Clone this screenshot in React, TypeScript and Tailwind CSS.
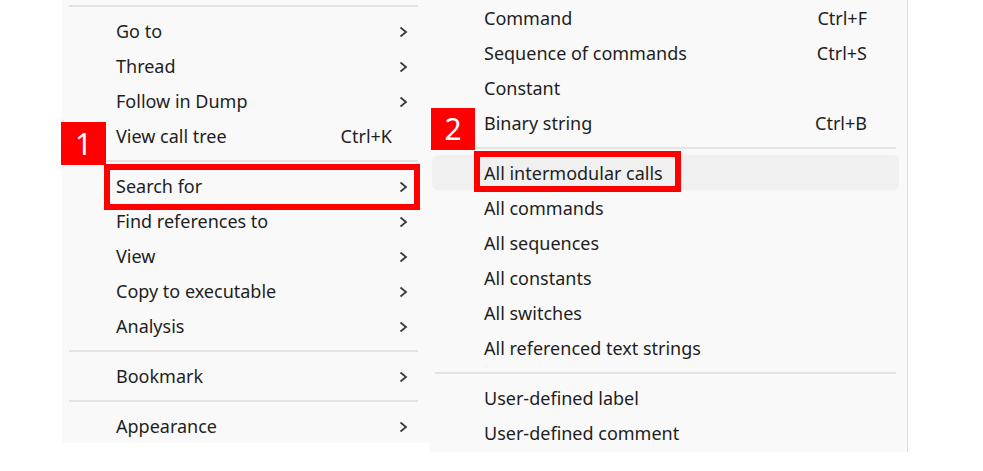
import React from "react"

type Item =
  | { kind: "item"; label: string; shortcut?: string; sub?: boolean; hover?: boolean }
  | { kind: "sep" }

const leftItems: Item[] = [
  { kind: "item", label: "Go to", sub: true },
  { kind: "item", label: "Thread", sub: true },
  { kind: "item", label: "Follow in Dump", sub: true },
  { kind: "item", label: "View call tree", shortcut: "Ctrl+K" },
  { kind: "sep" },
  { kind: "item", label: "Search for", sub: true },
  { kind: "item", label: "Find references to", sub: true },
  { kind: "item", label: "View", sub: true },
  { kind: "item", label: "Copy to executable", sub: true },
  { kind: "item", label: "Analysis", sub: true },
  { kind: "sep" },
  { kind: "item", label: "Bookmark", sub: true },
  { kind: "sep" },
  { kind: "item", label: "Appearance", sub: true },
]

const rightItems: Item[] = [
  { kind: "item", label: "Command", shortcut: "Ctrl+F" },
  { kind: "item", label: "Sequence of commands", shortcut: "Ctrl+S" },
  { kind: "item", label: "Constant" },
  { kind: "item", label: "Binary string", shortcut: "Ctrl+B" },
  { kind: "sep" },
  { kind: "item", label: "All intermodular calls", hover: true },
  { kind: "item", label: "All commands" },
  { kind: "item", label: "All sequences" },
  { kind: "item", label: "All constants" },
  { kind: "item", label: "All switches" },
  { kind: "item", label: "All referenced text strings" },
  { kind: "sep" },
  { kind: "item", label: "User-defined label" },
  { kind: "item", label: "User-defined comment" },
]

function Chevron() {
  return (
    <svg width="9" height="12" viewBox="0 0 9 12" className="text-[#3a3a3a]">
      <polyline points="1.5,1.5 7,6 1.5,10.5" fill="none" stroke="currentColor" strokeWidth="1.8" />
    </svg>
  )
}

function MenuRows({ items, side }: { items: Item[]; side: "left" | "right" }) {
  const sepInset = side === "left" ? "pl-[7px] pr-[11px]" : "pl-[6px] pr-[11px]"
  return (
    <>
      {items.map((it, i) =>
        it.kind === "sep" ? (
          <div key={i} className={`h-[15px] flex items-center ${sepInset}`}>
            <div className="h-[2px] w-full bg-[#e3e3e3]" />
          </div>
        ) : (
          <div
            key={i}
            className={`relative h-[35px] flex items-center pt-[2px] ${
              it.hover
                ? "bg-[#f0f0f0] rounded-md ml-[3px] mr-[8px] pl-[52px]"
                : side === "left"
                  ? "pl-[54px]"
                  : "pl-[55px]"
            }`}
          >
            <span className="flex-1">{it.label}</span>
            {it.shortcut && (
              <span className={side === "left" ? "mr-[37px]" : "mr-[40px]"}>{it.shortcut}</span>
            )}
            {it.sub && (
              <span className="absolute right-[21px] top-[13px]">
                <Chevron />
              </span>
            )}
          </div>
        )
      )}
    </>
  )
}

export default function App() {
  return (
    <div
      className="relative w-[983px] h-[471px] bg-white flex items-start overflow-hidden text-[18px] text-[#1e1e1e]"
      style={{ fontFamily: '"Noto Sans", "Open Sans", sans-serif' }}
    >
      {/* left menu */}
      <div className="ml-[62px] w-[367px] h-[443px] bg-[#f9f9f9] flex flex-col">
        <div className="h-[13px] flex items-center pl-[7px] pr-[11px]">
          <div className="h-[2px] w-full bg-[#e3e3e3] -mt-[2px]" />
        </div>
        <MenuRows items={leftItems} side="left" />
      </div>

      {/* submenu */}
      <div className="w-[479px] h-[452px] bg-[#f9f9f9] border-r border-[#dedede] flex flex-col">
        <MenuRows items={rightItems} side="right" />
      </div>

      {/* annotations */}
      <div className="absolute left-[61px] top-[122px] w-[45px] h-[43px] bg-[#ff0000] text-white flex items-center justify-center text-[30px] leading-none">
        1
      </div>
      <div className="absolute left-[104px] top-[164px] w-[316px] h-[46px] border-[6px] border-[#ff0000]" />
      <div className="absolute left-[431px] top-[108px] w-[44px] h-[42px] bg-[#ff0000] text-white flex items-center justify-center text-[30px] leading-none">
        2
      </div>
      <div className="absolute left-[474px] top-[151px] w-[207px] h-[41px] border-[6px] border-[#ff0000]" />
    </div>
  )
}
